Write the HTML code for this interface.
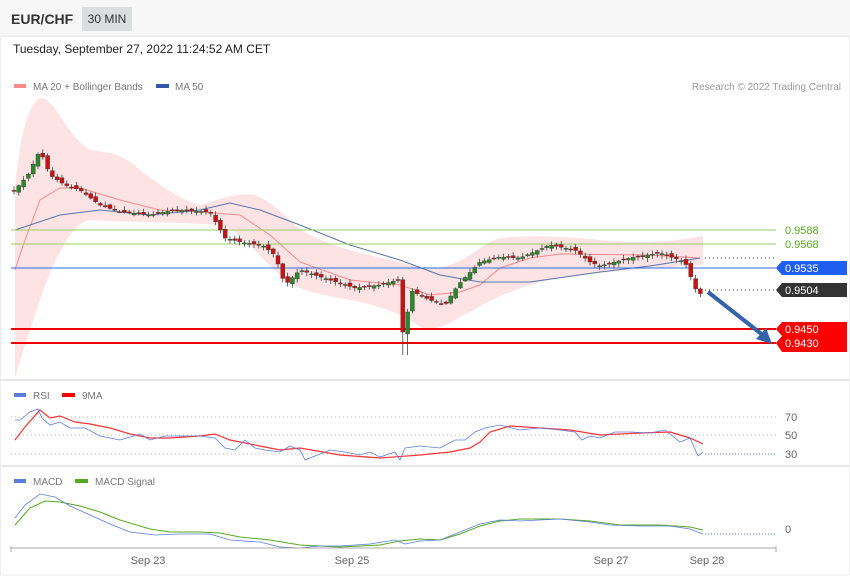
<!DOCTYPE html><html><head><meta charset="utf-8"><style>
body{margin:0;width:850px;height:576px;background:#fff;font-family:"Liberation Sans",sans-serif;overflow:hidden;position:relative}
.hdr{position:absolute;left:0;top:0;width:850px;height:36px;background:#f7f7f7;border-bottom:1px solid #eee}
.t{position:absolute;left:11px;top:11px;font-weight:bold;font-size:14px;color:#333}
.tf{position:absolute;left:82px;top:7px;width:50px;height:24px;background:#dcdde0;font-size:12px;color:#333;line-height:24px;text-align:center}
.d{position:absolute;left:13px;top:42px;font-size:12px;color:#222}
svg{position:absolute;left:0;top:0}
</style></head><body>
<div class="hdr"><div class="t">EUR/CHF</div><div class="tf">30 MIN</div></div>
<div class="d">Tuesday, September 27, 2022 11:24:52 AM CET</div>
<svg width="850" height="576" font-family="Liberation Sans, sans-serif" font-size="10">
<rect x="0.5" y="36" width="849" height="539" fill="none" stroke="#eee"/>
<line x1="0" y1="380" x2="850" y2="380" stroke="#e8e8e8" stroke-width="2"/>
<line x1="0" y1="466" x2="850" y2="466" stroke="#e8e8e8" stroke-width="2"/>
<rect x="14" y="84" width="12" height="4" fill="#f88"/><text x="33" y="90" fill="#777" font-size="10">MA 20 + Bollinger Bands</text>
<rect x="156" y="84" width="13" height="4" fill="#35a"/><text x="175" y="90" fill="#777">MA 50</text>
<text x="841" y="90" fill="#999" text-anchor="end">Research © 2022 Trading Central</text>
<path d="M15,190 C20,130 30,100 42,98 C55,100 70,140 90,150 C110,152 125,155 140,170 C160,185 180,200 200,205 C220,200 235,192 255,195 C280,205 290,225 310,235 C340,250 370,255 400,262 C420,268 430,272 450,265 C470,258 485,242 500,238 C530,235 560,236 600,240 C650,245 680,240 703,236 L703,265 C650,268 600,272 560,278 C520,285 490,300 470,312 C450,322 440,330 425,330 C405,315 380,305 350,300 C320,295 295,290 280,275 C260,258 240,230 220,225 C180,222 120,222 90,220 C70,222 50,270 40,300 C30,330 20,360 15,378 Z" fill="#fde3e3"/>
<polyline points="15,270 25,240 40,200 60,188 80,188 120,200 160,210 200,212 240,215 270,235 300,262 350,280 400,285 430,295 460,292 480,285 500,268 530,258 560,254 650,255 700,258" fill="none" stroke="#f88" stroke-width="1"/>
<polyline points="15,230 60,215 100,210 150,215 200,210 230,203 260,210 300,225 350,245 400,260 440,275 480,282 530,282 600,272 650,266 700,258" fill="none" stroke="#57a" stroke-width="1"/>
<line x1="11" y1="230" x2="776" y2="230" stroke="#9c6"/><line x1="11" y1="244" x2="776" y2="244" stroke="#9c6"/>
<line x1="11" y1="268" x2="776" y2="268" stroke="#2d6be4"/>
<line x1="705" y1="258" x2="776" y2="258" stroke="#333" stroke-dasharray="1,3"/>
<line x1="705" y1="290" x2="776" y2="290" stroke="#333" stroke-dasharray="1,3"/>
<line x1="11" y1="329" x2="776" y2="329" stroke="#e00" stroke-width="2"/><line x1="11" y1="343" x2="776" y2="343" stroke="#e00" stroke-width="2"/>
<g id="c"></g>
<line x1="708" y1="292" x2="764" y2="336" stroke="#3463a8" stroke-width="4"/><polygon points="772,344 756,339 766,328" fill="#3463a8"/>
<text x="785" y="234" fill="#5a2" font-size="11">0.9588</text><text x="785" y="248" fill="#5a2" font-size="11">0.9568</text>
<polygon points="776,268 782,261 847,261 847,275 782,275" fill="#1f5ff0"/><text x="785" y="272" fill="#fff" font-size="11">0.9535</text>
<polygon points="776,290 782,283 847,283 847,297 782,297" fill="#333"/><text x="785" y="294" fill="#fff" font-size="11">0.9504</text>
<polygon points="776,329 782,322 847,322 847,352 782,352 776,343 782,336" fill="#f00"/><text x="785" y="333" fill="#fff" font-size="11">0.9450</text><text x="785" y="347" fill="#fff" font-size="11">0.9430</text>
<rect x="14" y="393" width="12" height="4" fill="#5b7fe0"/><text x="33" y="399" fill="#777">RSI</text>
<rect x="62" y="393" width="13" height="4" fill="#f00"/><text x="82" y="399" fill="#777">9MA</text>
<g stroke="#bbb" stroke-dasharray="1,3"><line x1="11" y1="417" x2="776" y2="417"/><line x1="11" y1="435" x2="776" y2="435"/><line x1="11" y1="454" x2="700" y2="454"/></g>
<line x1="705" y1="454" x2="776" y2="454" stroke="#5b7fe0" stroke-dasharray="1,2"/>
<text x="785" y="421" fill="#666" font-size="11">70</text><text x="785" y="439" fill="#666" font-size="11">50</text><text x="785" y="458" fill="#666" font-size="11">30</text>
<polyline points="15,440 25,427 40,410 50,418 60,416 75,422 90,424 110,428 130,434 150,438 170,438 200,436 215,434 230,440 260,446 280,450 300,448 340,455 380,458 420,455 450,452 470,448 480,442 490,432 510,426 540,428 570,430 600,435 640,433 670,432 690,438 703,444" fill="none" stroke="#f33" stroke-width="1.2"/>
<polyline points="15,420 20,420 30,412 38,409 42,418 50,425 60,422 70,428 85,428 100,436 120,440 140,434 150,440 165,436 180,436 200,436 215,438 225,448 235,450 245,440 255,448 265,450 280,452 290,446 300,450 305,460 315,456 330,450 345,452 360,455 370,452 380,457 395,452 400,460 405,448 420,446 440,448 455,440 465,440 475,432 485,428 500,425 520,430 540,428 560,430 575,432 582,440 590,436 600,438 615,432 630,432 650,433 665,430 680,442 690,438 698,456 703,452" fill="none" stroke="#5b7fe0" stroke-width="0.8"/>
<rect x="14" y="479" width="12" height="4" fill="#5b7fe0"/><text x="33" y="485" fill="#777">MACD</text>
<rect x="75" y="479" width="13" height="4" fill="#5a2"/><text x="95" y="485" fill="#777">MACD Signal</text>
<line x1="705" y1="534" x2="776" y2="534" stroke="#5b7fe0" stroke-dasharray="1,2"/><text x="785" y="533" fill="#666" font-size="11">0</text>
<polyline points="15,525 30,508 45,501 60,502 80,506 100,512 120,520 150,529 170,532 200,532 220,533 240,537 270,540 300,545 340,547 380,545 400,541 420,539 440,540 460,534 480,526 500,521 520,519 560,519 590,521 620,525 660,525 690,527 703,530" fill="none" stroke="#5a2" stroke-width="1"/>
<polyline points="15,518 25,505 40,494 55,497 70,506 90,515 110,524 130,532 155,535 180,534 210,534 230,540 260,542 280,547 300,548 320,546 340,546 370,544 395,540 405,544 420,541 440,540 460,532 480,524 500,520 520,521 540,520 560,519 590,522 610,525 640,526 670,526 690,529 703,534" fill="none" stroke="#5b7fe0" stroke-width="0.8"/>
<line x1="11" y1="548" x2="776" y2="548" stroke="#aaa"/><line x1="11" y1="546" x2="11" y2="552" stroke="#aaa"/><line x1="776" y1="546" x2="776" y2="552" stroke="#aaa"/>
<g fill="#666" font-size="11" text-anchor="middle"><text x="148" y="564">Sep 23</text><text x="352" y="564">Sep 25</text><text x="611" y="564">Sep 27</text><text x="707" y="564">Sep 28</text></g>
</svg>
<script>
var a=[[15,190],[28,175],[40,150],[50,175],[65,185],[80,190],[100,205],[120,212],[150,215],[175,210],[210,212],[225,238],[245,243],[262,245],[275,255],[285,285],[300,270],[330,280],[355,288],[380,285],[398,280],[404,345],[410,290],[430,300],[445,305],[458,285],[480,262],[500,257],[520,258],[550,245],[575,250],[590,262],[600,266],[630,258],[660,253],[685,262],[698,295],[703,292]];
function f(x){for(var i=1;i<a.length;i++)if(x<=a[i][0]){var p=a[i-1],q=a[i];return p[1]+(q[1]-p[1])*(x-p[0])/(q[0]-p[0]);}return a[a.length-1][1];}
var s='',prev=f(13);
for(var x=14;x<=703;x+=4.8){var c=f(x),o=prev+(Math.sin(x*1.7)*2),h=Math.min(o,c)-1-Math.abs(Math.sin(x))*3,l=Math.max(o,c)+1+Math.abs(Math.cos(x*1.3))*3;if(x>400&&x<408)l=355;var up=c<o,col=up?'#2a8a2a':'#d01010';
s+='<line x1="'+x+'" y1="'+h+'" x2="'+x+'" y2="'+l+'" stroke="#444" stroke-width="0.8"/><rect x="'+(x-2)+'" y="'+Math.min(o,c)+'" width="4" height="'+Math.max(1,Math.abs(o-c))+'" fill="'+col+'" stroke="#333" stroke-width="0.4"/>';prev=c;}
document.getElementById('c').innerHTML=s;
</script>
</body></html>
